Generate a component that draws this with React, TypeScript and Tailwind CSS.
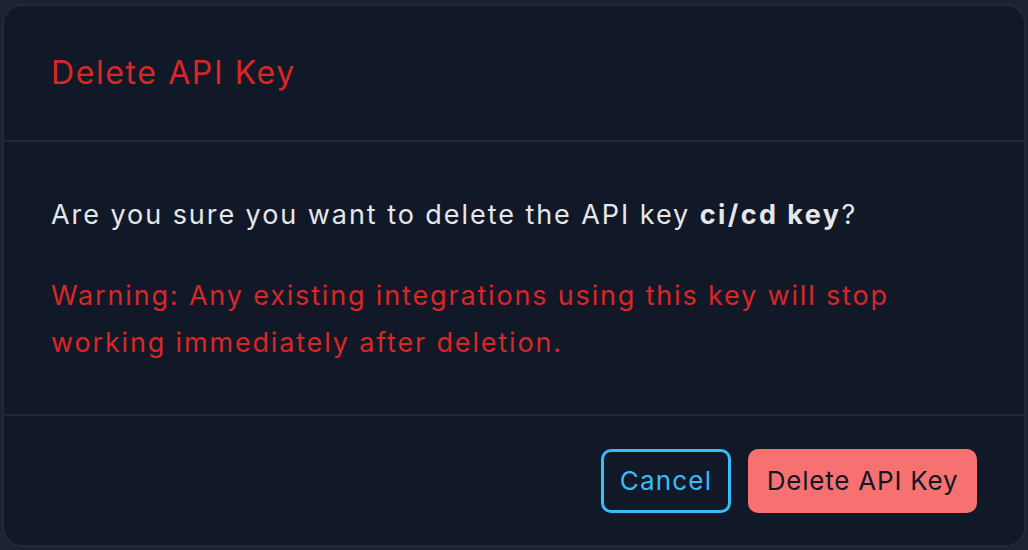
export default function App() {
  return (
    <div
      className="w-[1028px] h-[550px] bg-[#1c2330] pt-[4px] px-[2px] pb-[3px]"
      style={{ fontFamily: 'Inter, "Noto Sans", sans-serif' }}
    >
      <div className="h-full flex flex-col rounded-[20px] border-2 border-[#1f2937] bg-[#111827] overflow-hidden">
        <div className="h-[136px] flex items-center px-[47px] border-b-2 border-[#1f2937]">
          <h2 className="text-[32px] text-[#dc2626] tracking-[0.05em]">Delete API Key</h2>
        </div>
        <div className="flex-1 flex flex-col justify-center px-[47px] border-b-2 border-[#1f2937]">
          <p className="text-[27px] leading-[47px] text-[#e5e7eb] tracking-[0.072em] whitespace-nowrap">
            Are you sure you want to delete the API key <span className="font-bold tracking-[0.09em]">ci/cd key</span>?
          </p>
          <p className="mt-[34px] text-[27px] leading-[47px] text-[#dc2626] tracking-[0.068em] whitespace-nowrap">
            Warning: Any existing integrations using this key will stop
            <br />
            working immediately after deletion.
          </p>
        </div>
        <div className="h-[129px] flex items-center justify-end gap-[17px] pr-[47px]">
          <button className="h-[64px] w-[130px] rounded-[10px] border-[3px] border-[#38bdf8] text-[#38bdf8] text-[26px] tracking-[0.045em]">
            Cancel
          </button>
          <button className="h-[64px] w-[229px] rounded-[10px] bg-[#f87171] text-[#111827] text-[26px] tracking-[0.03em]">
            Delete API Key
          </button>
        </div>
      </div>
    </div>
  );
}
